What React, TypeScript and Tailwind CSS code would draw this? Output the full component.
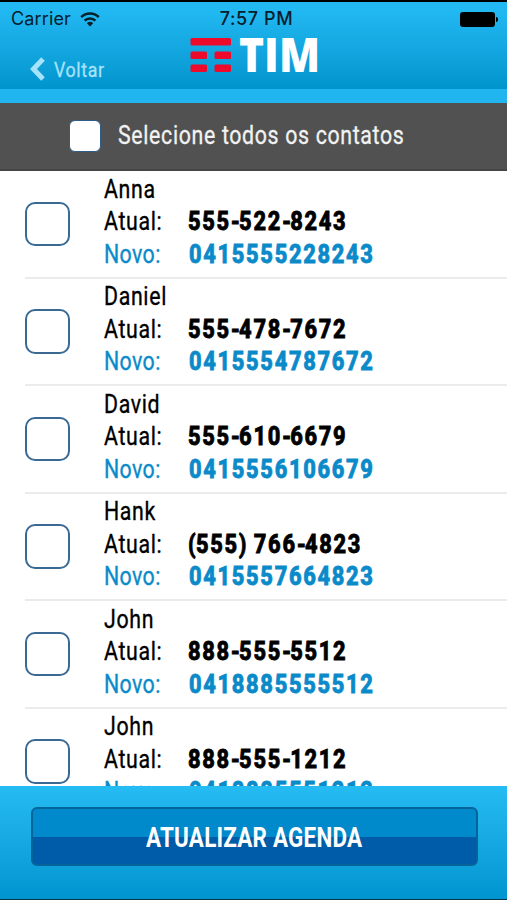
interface Contact {
  name: string;
  current: string;
  next: string;
}

const contacts: Contact[] = [
  { name: "Anna", current: "555-522-8243", next: "0415555228243" },
  { name: "Daniel", current: "555-478-7672", next: "0415554787672" },
  { name: "David", current: "555-610-6679", next: "0415556106679" },
  { name: "Hank", current: "(555) 766-4823", next: "0415557664823" },
  { name: "John", current: "888-555-5512", next: "0418885555512" },
  { name: "John", current: "888-555-1212", next: "0418885551212" },
];

function StatusBar() {
  return (
    <div className="grid h-[34px] grid-cols-3 items-center font-['Inter','Roboto',sans-serif] text-[18px] leading-5 text-[#06202c]">
      <div className="flex items-center gap-[9px] pl-[11px]">
        <span className="tracking-[0.15px]">Carrier</span>
        <svg width="20" height="15" viewBox="0 0 20 15" fill="none" stroke="currentColor" strokeWidth="2.5">
          <path d="M1.2 5.2a12.6 12.6 0 0 1 17.6 0" />
          <path d="M4.6 8.7a7.8 7.8 0 0 1 10.8 0" />
          <path d="M10 14.6 6.8 11.3a4.8 4.8 0 0 1 6.4 0z" fill="currentColor" stroke="none" />
        </svg>
      </div>
      <span className="pl-[6px] text-center text-[18px] font-medium tracking-[0.6px]">7:57 PM</span>
      <div className="flex items-center justify-end pr-[9px]">
        <span className="h-[15px] w-[35px] rounded-[3px] bg-black" />
        <span className="ml-[1px] h-[5px] w-[2px] rounded-r-full bg-black" />
      </div>
    </div>
  );
}

function TimLogo() {
  return (
    <svg className="mt-px" width="128" height="36" viewBox="0 0 128 36">
      <g fill="#ed0a2b">
        <rect x="0.5" y="1" width="40.5" height="7.5" rx="1.5" />
        <rect x="0.5" y="14.5" width="16.5" height="7.5" rx="1.5" />
        <rect x="24.5" y="14.5" width="16.5" height="7.5" rx="1.5" />
        <rect x="0.5" y="27.5" width="16.5" height="7.5" rx="1.5" />
        <rect x="24.5" y="27.5" width="16.5" height="7.5" rx="1.5" />
      </g>
      <text
        x="49"
        y="35"
        fill="#fff"
        fontSize="47"
        fontWeight="800"
        textLength="81"
        lengthAdjust="spacingAndGlyphs"
        fontFamily="'Open Sans', sans-serif"
      >
        TIM
      </text>
    </svg>
  );
}

function Header() {
  return (
    <header className="border-b-[14px] border-[#20b5ee] bg-linear-to-b from-[#22b9f3] from-10% to-[#0094cd]">
      <div className="h-[88.5px] border-t-2 border-black">
        <StatusBar />
        <div className="flex items-start">
          <button className="flex w-[190px] items-center gap-[9px] pt-[20px] pl-[30px] text-[#a6e3fb]">
            <svg width="15" height="24" viewBox="0 0 15 24" fill="none" stroke="currentColor" strokeWidth="5">
              <path d="M13 2 3.5 12 13 22" />
            </svg>
            <span className="origin-left scale-x-[0.85] pt-[2px] text-[21px] leading-6 tracking-[0.7px] [-webkit-text-stroke:0.3px]">
              Voltar
            </span>
          </button>
          <TimLogo />
        </div>
      </div>
    </header>
  );
}

function PhoneNumber({ value }: { value: string }) {
  return (
    <span className="origin-left scale-x-[0.84] font-extrabold tracking-[2px] [-webkit-text-stroke:0.8px]">
      {value.split(/([-()])/).map((part, index) => (
        <span key={index} className={part === "-" ? "tracking-[-1.1px]" : /[()]/.test(part) ? "tracking-[0.3px]" : ""}>
          {part}
        </span>
      ))}
    </span>
  );
}

function ContactRow({ contact }: { contact: Contact }) {
  return (
    <li className="ml-[25px] flex h-[107.5px] shrink-0 border-b-2 border-[#ebebeb] text-[26px] leading-[32.5px] whitespace-nowrap">
      <span className="mt-[30.5px] size-[44.5px] shrink-0 rounded-[10px] border-2 border-[#3a6a94] bg-white" />
      <div className="pt-[1.5px] pl-[34.5px] text-black [-webkit-text-stroke:0.35px]">
        <div className="origin-left scale-x-[0.82] tracking-[0.8px]">{contact.name}</div>
        <div className="flex">
          <span className="w-[84px] origin-left scale-x-[0.82] tracking-[0.8px]">Atual:</span>
          <PhoneNumber value={contact.current} />
        </div>
        <div className="flex text-[#0b8ac9]">
          <span className="w-[85px] origin-left scale-x-[0.82] tracking-[0.5px]">Novo:</span>
          <PhoneNumber value={contact.next} />
        </div>
      </div>
    </li>
  );
}

export default function App() {
  return (
    <div className="flex h-[900px] w-[507px] flex-col overflow-hidden bg-white font-['Roboto',sans-serif]">
      <Header />
      <div className="flex h-[68.5px] shrink-0 items-center border-b-2 border-[#454545] bg-[#515151] pl-[69px]">
        <span className="size-[32px] rounded-[6px] border border-[#2f5d85] bg-white" />
        <span className="ml-[17px] origin-left scale-x-[0.82] text-[26px] tracking-[0.8px] whitespace-nowrap text-[#f2f2f2] [-webkit-text-stroke:0.3px]">
          Selecione todos os contatos
        </span>
      </div>
      <ul className="flex min-h-0 flex-1 flex-col overflow-hidden">
        {contacts.map((contact) => (
          <ContactRow key={contact.next} contact={contact} />
        ))}
      </ul>
      <footer className="h-[114px] shrink-0 border-b border-[#06354a] bg-linear-to-b from-[#25bbf3] to-[#0095d0] px-[31px] pt-[21px]">
        <button className="flex h-[59px] w-[447px] items-center justify-center rounded-[6px] border-2 border-[#05659b] bg-linear-to-b from-[#008acb] from-50% to-[#005ca8] to-50%">
          <span className="scale-x-[0.8] pt-[2px] text-[28px] font-bold tracking-[0.3px] whitespace-nowrap text-white">
            ATUALIZAR AGENDA
          </span>
        </button>
      </footer>
    </div>
  );
}
